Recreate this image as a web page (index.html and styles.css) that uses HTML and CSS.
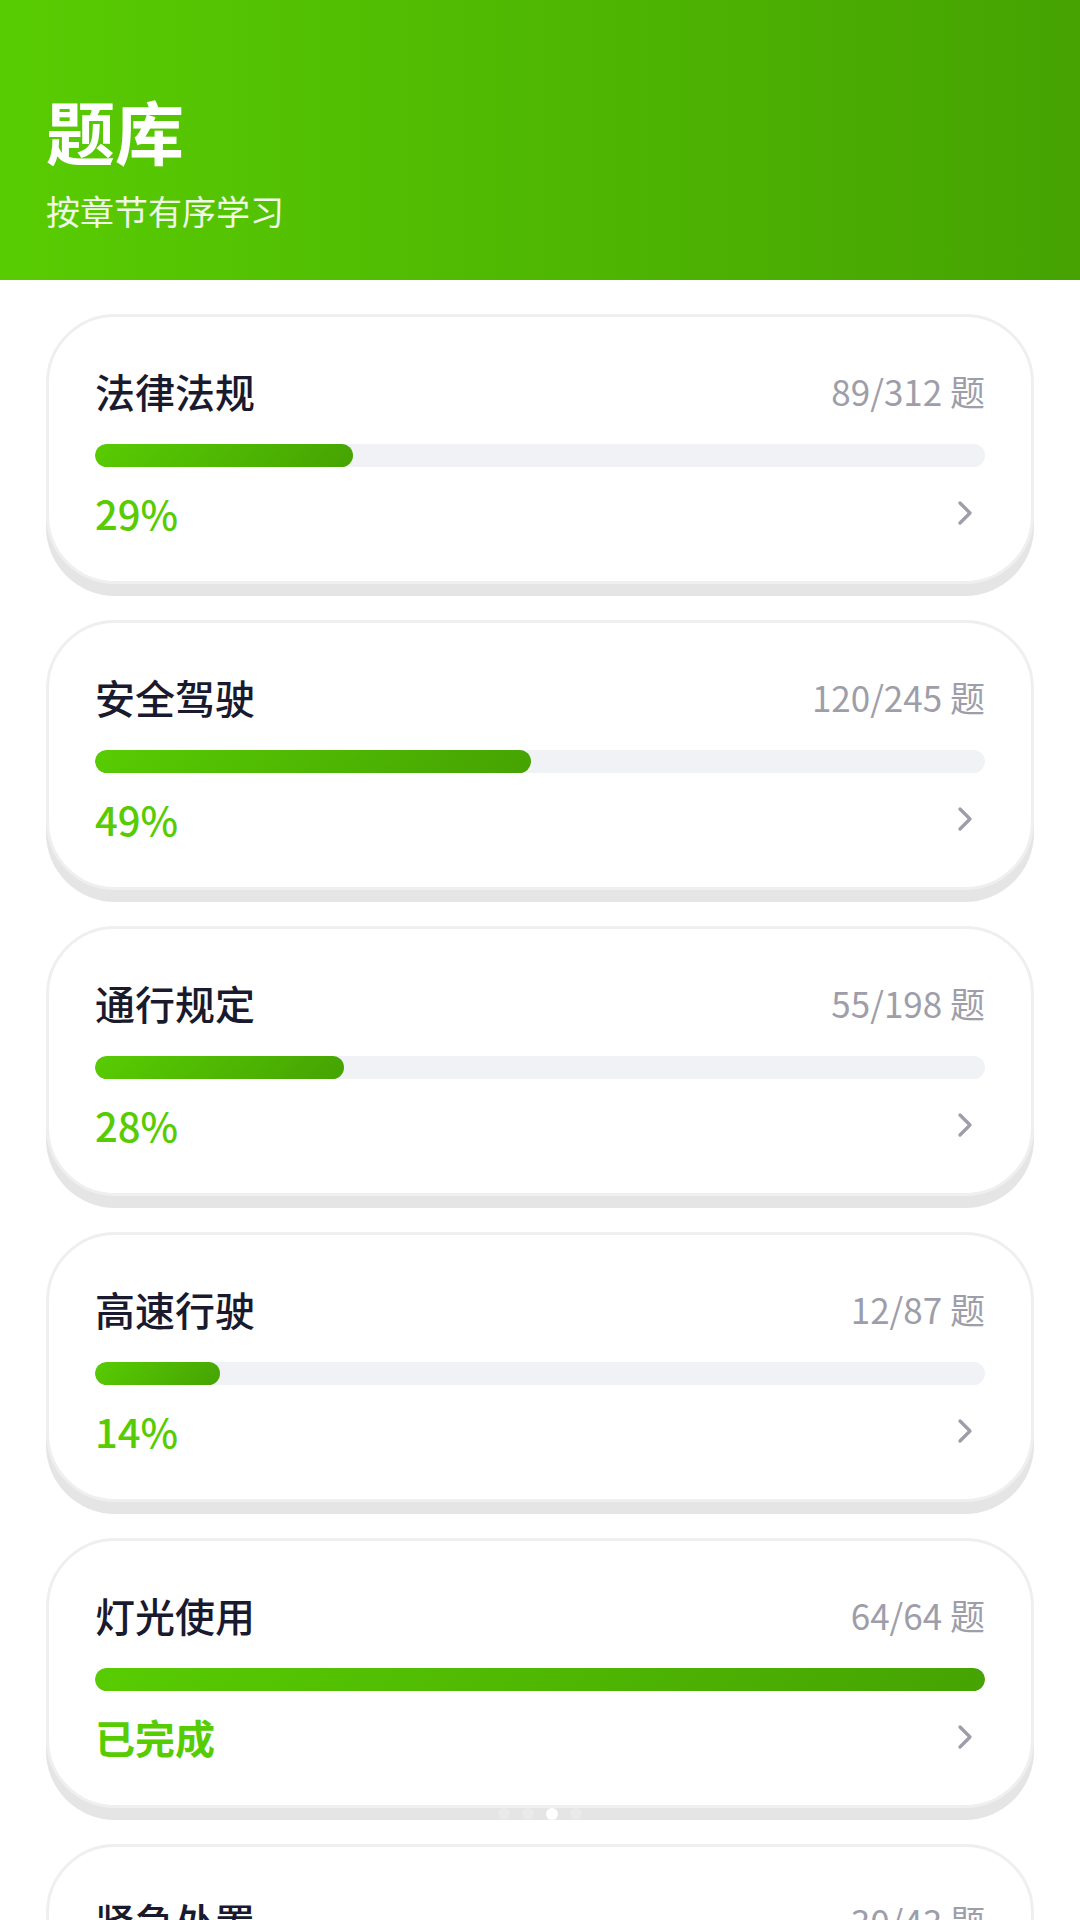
FILE: index.html
```html
<!DOCTYPE html>
<html lang="zh-CN">
  <head>
    <meta charset="UTF-8" />
    <meta name="viewport" content="width=device-width, initial-scale=1.0" />
    <title>题库</title>
    <link rel="stylesheet" href="styles.css">
  </head>
  <body>
    <header class="header">
      <h1>题库</h1>
      <p>按章节有序学习</p>
    </header>

    <main class="chapters">
      <a href="#law" class="card">
        <div class="card-head">
          <h2>法律法规</h2>
          <span class="count">89/312 题</span>
        </div>
        <div class="track"><div class="fill" style="width: 29%"></div></div>
        <div class="card-foot">
          <span class="percent">29%</span>
          <svg class="arrow" viewBox="0 0 24 24"><path d="M9 6l6 6-6 6" /></svg>
        </div>
      </a>

      <a href="#safety" class="card">
        <div class="card-head">
          <h2>安全驾驶</h2>
          <span class="count">120/245 题</span>
        </div>
        <div class="track"><div class="fill" style="width: 49%"></div></div>
        <div class="card-foot">
          <span class="percent">49%</span>
          <svg class="arrow" viewBox="0 0 24 24"><path d="M9 6l6 6-6 6" /></svg>
        </div>
      </a>

      <a href="#traffic" class="card">
        <div class="card-head">
          <h2>通行规定</h2>
          <span class="count">55/198 题</span>
        </div>
        <div class="track"><div class="fill" style="width: 28%"></div></div>
        <div class="card-foot">
          <span class="percent">28%</span>
          <svg class="arrow" viewBox="0 0 24 24"><path d="M9 6l6 6-6 6" /></svg>
        </div>
      </a>

      <a href="#highway" class="card">
        <div class="card-head">
          <h2>高速行驶</h2>
          <span class="count">12/87 题</span>
        </div>
        <div class="track"><div class="fill" style="width: 14%"></div></div>
        <div class="card-foot">
          <span class="percent">14%</span>
          <svg class="arrow" viewBox="0 0 24 24"><path d="M9 6l6 6-6 6" /></svg>
        </div>
      </a>

      <a href="#lights" class="card">
        <div class="card-head">
          <h2>灯光使用</h2>
          <span class="count">64/64 题</span>
        </div>
        <div class="track"><div class="fill" style="width: 100%"></div></div>
        <div class="card-foot">
          <span class="percent done">已完成</span>
          <svg class="arrow" viewBox="0 0 24 24"><path d="M9 6l6 6-6 6" /></svg>
        </div>
      </a>

      <a href="#emergency" class="card">
        <div class="card-head">
          <h2>紧急处置</h2>
          <span class="count">30/43 题</span>
        </div>
        <div class="track"><div class="fill" style="width: 70%"></div></div>
        <div class="card-foot">
          <span class="percent">70%</span>
          <svg class="arrow" viewBox="0 0 24 24"><path d="M9 6l6 6-6 6" /></svg>
        </div>
      </a>
    </main>

    <div class="dots">
      <span class="dot"></span>
      <span class="dot"></span>
      <span class="dot active"></span>
      <span class="dot"></span>
    </div>
  </body>
</html>
```
FILE: styles.css
```css
:root {
  --green: #58cc02;
  --green-dark: #46a302;
  --text: #1a1a2e;
  --muted: #9e9eaa;
  --border: #efefef;
  --shadow: #e5e5e5;
  --track: #f0f2f5;
}

* {
  box-sizing: border-box;
  margin: 0;
}

body {
  display: flex;
  flex-direction: column;
  height: 100vh;
  overflow: hidden;
  font-family: "Noto Sans CJK SC", sans-serif;
  background: #fff;
  color: var(--text);
}

.header {
  flex: none;
  padding: 80px 46px 42px;
  background: linear-gradient(90deg, var(--green), var(--green-dark));
  color: #fff;
}

.header h1 {
  margin-bottom: 4px;
  font-size: 69px;
  line-height: 100px;
  font-weight: 700;
}

.header p {
  font-size: 34px;
  line-height: 54px;
  opacity: 0.9;
}

.chapters {
  flex: 1;
  min-height: 0;
  display: flex;
  flex-direction: column;
  gap: 36px;
  padding: 34px 46px;
  overflow: hidden;
}

.card {
  flex: none;
  padding: 46px;
  border: 3px solid var(--border);
  border-radius: 69px;
  box-shadow: 0 12px 0 var(--shadow);
  background: #fff;
  color: inherit;
  text-decoration: none;
}

.card-head,
.card-foot {
  display: flex;
  justify-content: space-between;
  align-items: center;
}

.card-head {
  line-height: 56px;
}

.card-head h2 {
  font-size: 40px;
  font-weight: 500;
}

.count {
  font-size: 35px;
  color: var(--muted);
}

.track {
  height: 23px;
  margin: 25px 0 24px;
  border-radius: 12px;
  background: var(--track);
  overflow: hidden;
}

.fill {
  height: 100%;
  border-radius: 12px;
  background: linear-gradient(135deg, var(--green), var(--green-dark));
}

.card-foot {
  line-height: 44px;
}

.percent {
  font-size: 40px;
  font-weight: 500;
  color: var(--green);
}

.percent.done {
  font-weight: 700;
}

.arrow {
  width: 40px;
  height: 40px;
  fill: none;
  stroke: var(--muted);
  stroke-width: 2;
  stroke-linecap: round;
  stroke-linejoin: round;
}

/* page indicator floating over the list */
.dots {
  position: fixed;
  left: 0;
  right: 0;
  bottom: 100px;
  display: flex;
  justify-content: center;
  gap: 12px;
}

.dot {
  width: 12px;
  height: 12px;
  border-radius: 50%;
  background: #fff;
  opacity: 0.2;
}

.dot.active {
  opacity: 1;
}
```
